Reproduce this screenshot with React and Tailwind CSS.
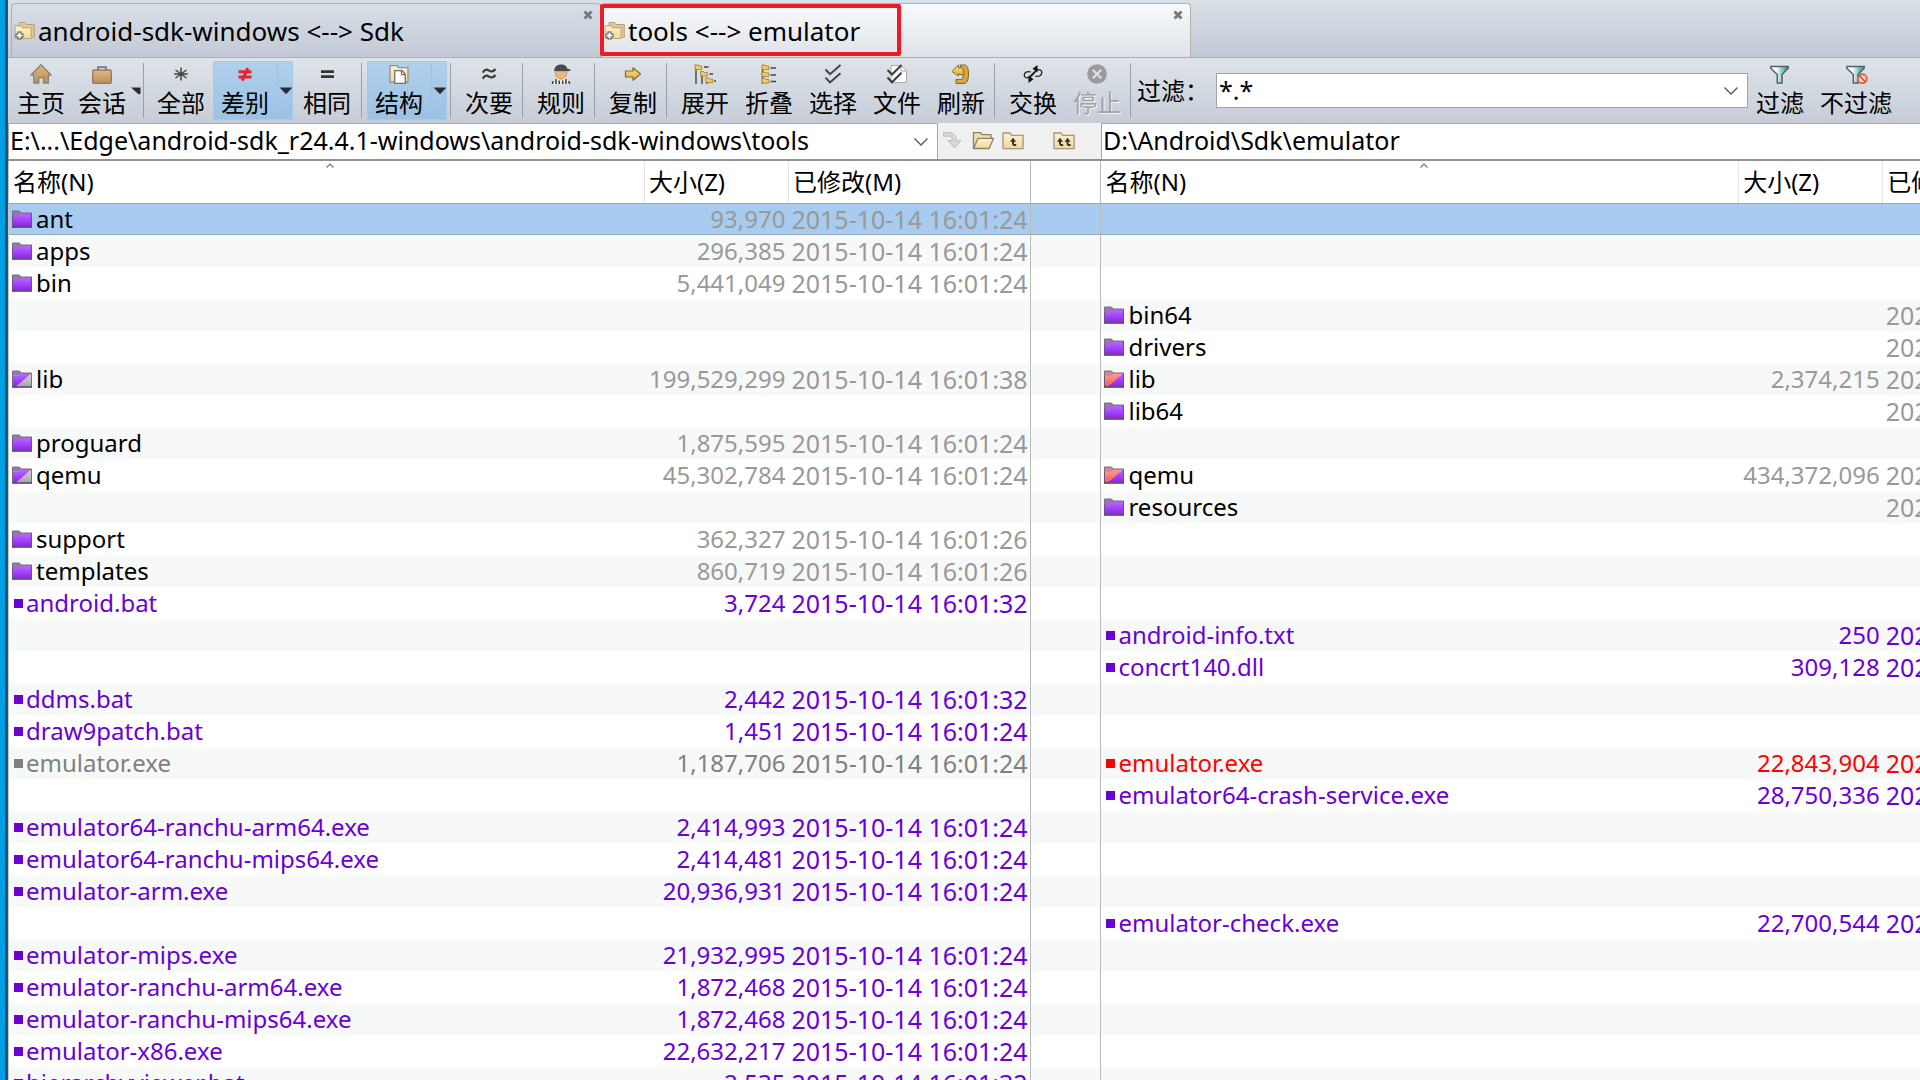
const PURPLE = "text-[#6a00d5]";
const GREY = "text-[#999999]";
const RED = "text-[#ff0000]";
const DIM = "text-[#808080]";
const T24 = "2015-10-14 16:01:24";

const dir = (name, size, date, kind = "purple") => ({ name, size, date, kind, folder: true, color: GREY });
const file = (name, size, date, color = PURPLE) => ({ name, size, date, color });

const ROWS = [
  [dir("ant", "93,970", T24), null],
  [dir("apps", "296,385", T24), null],
  [dir("bin", "5,441,049", T24), null],
  [null, dir("bin64", "", "202")],
  [null, dir("drivers", "", "202")],
  [dir("lib", "199,529,299", "2015-10-14 16:01:38", "older"), dir("lib", "2,374,215", "202", "newer")],
  [null, dir("lib64", "", "202")],
  [dir("proguard", "1,875,595", T24), null],
  [dir("qemu", "45,302,784", T24, "older"), dir("qemu", "434,372,096", "202", "newer")],
  [null, dir("resources", "", "202")],
  [dir("support", "362,327", "2015-10-14 16:01:26"), null],
  [dir("templates", "860,719", "2015-10-14 16:01:26"), null],
  [file("android.bat", "3,724", "2015-10-14 16:01:32"), null],
  [null, file("android-info.txt", "250", "202")],
  [null, file("concrt140.dll", "309,128", "202")],
  [file("ddms.bat", "2,442", "2015-10-14 16:01:32"), null],
  [file("draw9patch.bat", "1,451", T24), null],
  [file("emulator.exe", "1,187,706", T24, DIM), file("emulator.exe", "22,843,904", "202", RED)],
  [null, file("emulator64-crash-service.exe", "28,750,336", "202")],
  [file("emulator64-ranchu-arm64.exe", "2,414,993", T24), null],
  [file("emulator64-ranchu-mips64.exe", "2,414,481", T24), null],
  [file("emulator-arm.exe", "20,936,931", T24), null],
  [null, file("emulator-check.exe", "22,700,544", "202")],
  [file("emulator-mips.exe", "21,932,995", T24), null],
  [file("emulator-ranchu-arm64.exe", "1,872,468", T24), null],
  [file("emulator-ranchu-mips64.exe", "1,872,468", T24), null],
  [file("emulator-x86.exe", "22,632,217", T24), null],
  [file("hierarchyviewer.bat", "2,535", "2015-10-14 16:01:32"), null],
];

const rowTone = (i) =>
  i === 0
    ? "bg-[#a8cbf0] shadow-[inset_0_1px_#93a8bf,inset_0_-1px_#93a8bf]"
    : i % 2
      ? "bg-[#f7f9f9]"
      : "bg-white";

function Gradients() {
  return (
    <svg className="absolute size-0" aria-hidden="true">
      <defs>
        <linearGradient id="tan" x1="0" y1="0" x2="0" y2="1">
          <stop offset="0" stopColor="#e2b97c" />
          <stop offset="1" stopColor="#bd8c5c" />
        </linearGradient>
        <linearGradient id="cream" x1="0" y1="0" x2="0" y2="1">
          <stop offset="0" stopColor="#fdf3d4" />
          <stop offset="1" stopColor="#f2d795" />
        </linearGradient>
        <linearGradient id="gold" x1="0" y1="0" x2="0" y2="1">
          <stop offset="0" stopColor="#ffe27a" />
          <stop offset="1" stopColor="#e2a93a" />
        </linearGradient>
        <linearGradient id="violet" x1="0" y1="0" x2="0" y2="1">
          <stop offset="0" stopColor="#b866ff" />
          <stop offset="1" stopColor="#8b22ee" />
        </linearGradient>
        <linearGradient id="ash" x1="0" y1="0" x2="0" y2="1">
          <stop offset="0" stopColor="#d6d6d6" />
          <stop offset="1" stopColor="#a4a4a4" />
        </linearGradient>
        <linearGradient id="coral" x1="0" y1="0" x2="0" y2="1">
          <stop offset="0" stopColor="#ff9a94" />
          <stop offset="1" stopColor="#ff5c56" />
        </linearGradient>
        <linearGradient id="teal" x1="0" y1="0" x2="1" y2="0">
          <stop offset="0" stopColor="#ffffff" />
          <stop offset="0.35" stopColor="#f0fafa" />
          <stop offset="0.8" stopColor="#4fb3b3" />
          <stop offset="1" stopColor="#3d9a9c" />
        </linearGradient>
      </defs>
    </svg>
  );
}

function Svg({ w = 22, h = 20, className = "", children }) {
  return (
    <svg width={w} height={h} viewBox={`0 0 ${w} ${h}`} fill="none" className={`shrink-0 ${className}`} aria-hidden="true">
      {children}
    </svg>
  );
}

const HomeIcon = () => (
  <Svg>
    <path d="M11 .8 21 11h-2.6v8h-5v-5.5H8.800V19h-5v-8H1z" fill="url(#tan)" stroke="#8a8078" strokeWidth="1.3" strokeLinejoin="round" />
  </Svg>
);
const BriefcaseIcon = () => (
  <Svg>
    <path d="M7 7V3.2h8V7" stroke="#7f7870" strokeWidth="1.8" />
    <rect x="1.7" y="6" width="18.6" height="13.3" rx="1.4" fill="url(#tan)" stroke="#8a7a68" strokeWidth="1.3" />
  </Svg>
);
const AllIcon = () => (
  <Svg>
    <path d="M11 3.500v13M5.500 6l11 8M16.500 6l-11 8M4.200 10h13.600" stroke="#444" strokeWidth="1.500" />
  </Svg>
);
const DiffIcon = () => (
  <Svg>
    <path d="M4.500 7.800h13M4.500 13h13M13.800 4 8.200 16.600" stroke="#e3242b" strokeWidth="3" />
  </Svg>
);
const SameIcon = () => (
  <Svg>
    <path d="M5 7.600h13M5 12.600h13" stroke="#333" strokeWidth="2.800" />
  </Svg>
);
const ApproxIcon = () => (
  <Svg>
    <path d="M4.800 8.600c2-3.600 4-3.400 6.200-2s4.200 1.600 6.500-1.600M4.800 14.600c2-3.600 4-3.400 6.200-2s4.200 1.600 6.500-1.600" stroke="#3a3a3a" strokeWidth="2.200" />
  </Svg>
);
const StructureIcon = () => (
  <Svg>
    <path d="M2 18V1.700h7l1.500 2H20V18z" fill="url(#cream)" stroke="#a09070" strokeWidth="1.300" />
    <path d="M6.700 6.700h7.300l3.300 3.500v9.100H6.700z" fill="#fff" stroke="#6f7276" strokeWidth="1.300" />
    <path d="M13.500 7v3.600H17" stroke="#6f7276" strokeWidth="1.200" />
  </Svg>
);
const RefereeIcon = () => (
  <Svg>
    <path d="M5 7c0 5.500 2.600 8.200 6 8.200s6-2.700 6-8.200z" fill="#ecb680" stroke="#c48c58" strokeWidth=".8" />
    <path d="M4.200 7C4.200 2.800 7 .4 11 .4s6 2 6.300 4.400l3 .4v1.800z" fill="#4a4a4c" />
    <path d="M1.500 20c.6-3.500 3-5.200 5.500-5.700l4 2 4-2c2.500.5 5 2.200 5.500 5.700z" fill="#f4f4f4" />
    <path d="M2.200 20l1.200-3M6 20v-5M9.300 20v-3.500M12.700 20v-3.500M16 20v-5M19.800 20l-1.200-3" stroke="#333" strokeWidth="1.500" />
  </Svg>
);
const CopyIcon = () => (
  <Svg>
    <path d="M3.500 7h7.500V3.700l7.500 6.300-7.500 6.300V13H3.500z" fill="url(#gold)" stroke="#776a45" strokeWidth="1.200" strokeLinejoin="round" />
  </Svg>
);
const MiniFolder = ({ x, y }) => (
  <path d={`M${x} ${y}h3l.8 1h3v3.600h-6.800z`} fill="#f5cc5a" stroke="#a5803a" strokeWidth=".9" />
);
const ExpandIcon = () => (
  <Svg>
    <path d="M2 5v15M8 12v8M13 17v3M10 3h4.500M15.500 10H19M20 17h2" stroke="#444" strokeWidth="1.400" />
    <MiniFolder x={1} y={1} />
    <MiniFolder x={6.500} y={7.500} />
    <MiniFolder x={11.800} y={14} />
  </Svg>
);
const CollapseIcon = () => (
  <Svg>
    <path d="M4.500 5v15M12.500 4h5.500M12.500 11h5.500M12.500 17.500h5.500" stroke="#444" strokeWidth="1.400" />
    <MiniFolder x={4} y={1} />
    <MiniFolder x={4} y={8} />
    <MiniFolder x={4} y={14.500} />
  </Svg>
);
const SelectIcon = () => (
  <Svg>
    <path d="M3.500 5.500 8 10.200 18.500 1M3.500 13.700 8 18.400l10.500-9.200" stroke="#404040" strokeWidth="1.900" />
  </Svg>
);
const FilesIcon = () => (
  <Svg>
    <path d="M5 1.500h10l5.500 5.500v11.500H5z" fill="#fbfbfb" stroke="#a9acb0" />
    <path d="M15 1.500V7h5.500" stroke="#a9acb0" />
    <path d="M1.500 6 6 10.500 15.500 1M1.500 13.500 6 18.200l9.500-9.500" stroke="#3a3a3a" strokeWidth="2" />
  </Svg>
);
const RefreshIcon = () => (
  <Svg>
    <path d="M10 1h4.500c2.500 0 4 3 4 9s-1.700 9.500-4.500 9.500H6v-4h5.500c1 0 1.600-2 1.600-5.500z" fill="#d9a640" stroke="#7d6636" />
    <path d="M2 7.500 8.500.800v3.400L12 3.500c1.500 2 2.200 4.500 1.800 7.500L8.500 10v2z" fill="url(#gold)" stroke="#7d6636" />
  </Svg>
);
const SwapIcon = () => (
  <Svg>
    <path d="M9 8C5 6.800 2.200 8.600 2.200 11.200c0 2.800 3.300 3.400 5.300 1.600l6.200-6.200M13 12c4 1.200 6.800-.8 6.800-3.600 0-2.600-2.800-3.600-5-2L8.500 13" stroke="#222" strokeWidth="1.300" />
    <path d="M10.500 4.800 15.500 1v7.200zM11.500 15.200 6.500 19v-7.200z" fill="#111" />
  </Svg>
);
const StopIcon = () => (
  <Svg>
    <circle cx="11" cy="10" r="9.800" fill="#999b9e" />
    <path d="m6.800 5.800 8.400 8.400M15.200 5.800l-8.400 8.400" stroke="#dfe2e6" strokeWidth="2" />
  </Svg>
);
const FilterIcon = ({ off }) => (
  <Svg w={24}>
    <path d="M2.800 2.500h17.400v1.800l-6.200 6.200V19H9.300v-8.500L2.800 4.300z" fill="url(#teal)" stroke="#5a5f64" strokeWidth="1.500" />
    {off && (
      <g stroke="#dd5638" strokeWidth="1.700">
        <circle cx="18.300" cy="14.700" r="4.500" fill="#e8d4d0" />
        <path d="m15.200 11.600 6.200 6.200" />
      </g>
    )}
  </Svg>
);

const SessionIcon = () => (
  <Svg w={21} h={21}>
    <path d="M5 12V2.500h5.500l1.500 2h8.300v12.800h-4z" fill="#e6c88c" stroke="#b3a27e" />
    <path d="M1 17.500V5.800h6l1.500 2h8.700v10.700H1z" fill="url(#cream)" stroke="#b3a27e" />
    <path d="M5.500 11.500v8M1.500 15.500h8" stroke="#555" strokeWidth="4" />
    <path d="M5.500 12.500v6M2.500 15.500h6" stroke="#fff" strokeWidth="2" />
  </Svg>
);

function FolderIcon({ kind }) {
  const front = kind === "newer" ? "url(#coral)" : "url(#violet)";
  const back = kind === "older" ? "url(#ash)" : "url(#violet)";
  return (
    <Svg w={20} h={18}>
      <path d="M.5 1h7l1.500 2h10.500v4H.5z" fill={kind === "newer" ? "#c98f90" : "#9678ae"} stroke="#7a6c86" />
      <path d="M.5 5.500h7L9.500 4h10v12.500H.5z" fill={back} />
      {kind !== "purple" && <path d="M.5 5.500h7L9.500 4h9L4 16.500H.5z" fill={front} />}
      <path d="M.5 5.500V17M19.500 3v14" stroke={kind === "older" ? "#77727c" : "#6d5285"} />
      <path d="M0 17h20" stroke="#4b3560" strokeWidth="1.500" />
    </Svg>
  );
}

const OpenFolderIcon = () => (
  <Svg>
    <path d="M1.500 17.500V1.700h7l1.500 2h9v3.800" fill="#f4dfae" stroke="#8c8069" strokeWidth="1.300" />
    <path d="M1.500 17.500 6 7.300h15.500l-4.300 10.200z" fill="url(#cream)" stroke="#8c8069" strokeWidth="1.300" strokeLinejoin="round" />
  </Svg>
);
const UpFolderIcon = ({ twice }) => (
  <Svg>
    <path d="M1 17.700V2h7l1.500 2.300h11.600v13.400z" fill="url(#cream)" stroke="#a3987e" strokeWidth="1.300" />
    {(twice ? [4, 11.500] : [8]).map((x) => (
      <g key={x}>
        <path d={`M${x + 3} 8.500v3.800q0 2.200 3.200 1.700`} stroke="#333" strokeWidth="2" />
        <path d={`M${x} 10.800l3-4 3.200 4z`} fill="#333" />
      </g>
    ))}
  </Svg>
);
const GoIcon = () => (
  <Svg>
    <path d="M1.500 1.500h5c5 0 8 3 8 8h4.500l-6.500 7.500L6 9.500h4.500C10.500 7 9 5.200 6.500 5.200h-5z" fill="#d8d8d8" stroke="#bdbdbd" />
  </Svg>
);
const ChevronIcon = () => (
  <Svg w={16} h={10}>
    <path d="m1.500 1.500 6.500 6.500L14.500 1.500" stroke="#555" strokeWidth="1.300" />
  </Svg>
);
const CaretIcon = () => (
  <Svg w={14} h={8}>
    <path d="M.5.500h13L7 7.200z" fill="#2c2c2e" />
  </Svg>
);
const HalfCaretIcon = () => (
  <Svg w={10} h={8}>
    <path d="M0 .500h9.500V7L7.500 7.200z" fill="#2c2c2e" />
  </Svg>
);

function Tool({ icon, label, width = "w-16", disabled }) {
  return (
    <button type="button" disabled={disabled} className={`flex ${width} shrink-0 flex-col items-center pt-[3px]`}>
      {icon}
      <span className={`mt-0.5 leading-[34px] ${disabled ? "text-[#a0a3a7] [text-shadow:1px_1px_0_#f3f5f7]" : ""}`}>{label}</span>
    </button>
  );
}

function SplitTool({ icon, label }) {
  return (
    <div className="flex shrink-0 bg-linear-to-b from-[#b0d1ee] to-[#9dc1e2] outline-1 -outline-offset-1 outline-[#a3c9ee]">
      <Tool icon={icon} label={label} />
      <button type="button" aria-label={`${label} 选项`} className="flex w-4 items-center justify-center border-l border-[#98c2e8]">
        <CaretIcon />
      </button>
    </div>
  );
}

const Sep = ({ className = "ml-px w-[7px]" }) => <div className={`my-[2px] shrink-0 border-l border-[#9a9ea6] ${className}`} />;

function Tab({ title, active }) {
  return (
    <div
      className={`flex min-w-0 basis-[590px] items-center rounded-t-sm border border-b-0 border-[#b5afa5] pl-0.5 ${
        active ? "bg-linear-to-b from-[#f8fafc] to-[#dfe3e9]" : "bg-linear-to-b from-[#d9dfe7] to-[#c3cad6]"
      }`}
    >
      <button type="button" role="tab" aria-selected={!!active} className="flex flex-1 items-center gap-[3px] text-left text-[26px] leading-[40px]">
        <SessionIcon />
        {title}
      </button>
      <button type="button" aria-label="关闭" className="mr-[7px] mt-1.5 self-start">
        <Svg w={10} h={10}>
          <path d="m1.500 1.500 7 7M8.500 1.500l-7 7" stroke="#77797d" strokeWidth="3" />
        </Svg>
      </button>
    </div>
  );
}

function PathBox({ label, value }) {
  return (
    <div className="flex min-w-0 flex-1 items-center border border-b-0 border-[#a8a8a8] bg-white">
      <input aria-label={label} defaultValue={value} className="min-w-0 flex-1 pb-0.5 pl-px text-[25px] leading-[33px] outline-none" />
      <button type="button" aria-label="历史" className="mr-2 shrink-0">
        <ChevronIcon />
      </button>
    </div>
  );
}

function FileTable({ side, label, className }) {
  return (
    <table className={`table-fixed border-collapse ${className}`} aria-label={label}>
      <colgroup>
        <col />
        <col className="w-36" />
        <col className="w-[242px]" />
      </colgroup>
      <thead>
        <tr className="h-[42px] bg-white text-left leading-[42px]">
          <th className="relative pl-1 font-normal">
            名称(N)
            <Svg w={8} h={5} className="absolute left-1/2 top-[2px]">
              <path d="m.5 4.500 3.500-3.500 3.500 3.500" stroke="#777" strokeWidth="1.200" />
            </Svg>
          </th>
          <th className="border-l border-[#e4e4e4] pl-1 font-normal">大小(Z)</th>
          <th className="border-l border-[#e4e4e4] pl-1 font-normal">已修改(M)</th>
        </tr>
      </thead>
      <tbody>
        {ROWS.map((pair, i) => {
          const e = pair[side];
          return (
            <tr key={i} className={`h-8 leading-[32px] ${rowTone(i)}`}>
              <td className="p-0">
                {e && (
                  <div className={e.folder ? "flex items-center gap-1 pl-[3px]" : `flex items-center gap-[3px] pl-[5px] ${e.color}`}>
                    {e.folder ? <FolderIcon kind={e.kind} /> : <span className="size-[9px] bg-current" />}
                    {e.name}
                  </div>
                )}
              </td>
              <td className={`p-0 pr-[3px] text-right ${e ? e.color : ""}`}>{e?.size}</td>
              <td className={`p-0 pl-[3px] text-[25px] ${e ? e.color : ""}`}>{e?.date}</td>
            </tr>
          );
        })}
      </tbody>
    </table>
  );
}

export default function App() {
  return (
    <div className="flex h-screen overflow-hidden whitespace-nowrap bg-white font-['Noto_Sans','Noto_Sans_CJK_SC',sans-serif] text-[24px] text-black">
      <Gradients />
      <div className="w-2 shrink-0 border-r-3 border-[#1d5673] bg-[#009fe3]" />
      <div className="flex min-w-0 flex-1 flex-col">
        <div role="tablist" className="relative flex h-[58px] shrink-0 border-b border-[#b3aea6] bg-linear-to-b from-[#dae0e8] to-[#c2c9d5] pl-[3px] pt-[3px]">
          <Tab title="android-sdk-windows <--> Sdk" />
          <Tab title="tools <--> emulator" active />
          <div className="pointer-events-none absolute left-[592px] top-1 h-[52px] w-[301px] rounded-xs border-4 border-[#ed1c24]" />
        </div>

        <div className="flex h-[65px] shrink-0 bg-linear-to-b from-[#dfe4ea] to-[#c6cdd7] py-[3px] pl-px">
          <Tool icon={<HomeIcon />} label="主页" />
          <div className="flex shrink-0">
            <Tool icon={<BriefcaseIcon />} label="会话" width="w-[58px]" />
            <button type="button" aria-label="会话 选项" className="flex w-3 items-center">
              <HalfCaretIcon />
            </button>
          </div>
          <Sep className="w-1.5" />
          <Tool icon={<AllIcon />} label="全部" />
          <SplitTool icon={<DiffIcon />} label="差别" />
          <div className="mx-0.5 flex">
            <Tool icon={<SameIcon />} label="相同" />
          </div>
          <Sep className="w-1.5" />
          <SplitTool icon={<StructureIcon />} label="结构" />
          <div className="w-0.5 shrink-0" />
          <Sep />
          <Tool icon={<ApproxIcon />} label="次要" />
          <Sep />
          <Tool icon={<RefereeIcon />} label="规则" />
          <Sep />
          <Tool icon={<CopyIcon />} label="复制" />
          <Sep />
          <Tool icon={<ExpandIcon />} label="展开" />
          <Tool icon={<CollapseIcon />} label="折叠" />
          <Tool icon={<SelectIcon />} label="选择" />
          <Tool icon={<FilesIcon />} label="文件" />
          <Tool icon={<RefreshIcon />} label="刷新" />
          <Sep />
          <Tool icon={<SwapIcon />} label="交换" />
          <Tool icon={<StopIcon />} label="停止" disabled />
          <Sep />
          <label htmlFor="filter" className="mr-[7px] self-center leading-[34px]">
            过滤：
          </label>
          <div className="my-3 flex min-w-0 flex-1 items-center border border-[#a0a4aa] bg-white">
            <input id="filter" defaultValue="*.*" className="min-w-0 flex-1 pl-0.5 text-[25px] leading-[33px] outline-none" />
            <button type="button" aria-label="过滤列表" className="mr-2 shrink-0">
              <ChevronIcon />
            </button>
          </div>
          <Tool icon={<FilterIcon />} label="过滤" />
          <Tool icon={<FilterIcon off />} label="不过滤" width="w-[88px]" />
          <div className="w-5 shrink-0" />
        </div>

        <div className="grid h-[38px] shrink-0 grid-cols-[minmax(0,1022fr)_71px_minmax(0,819fr)] border-b-2 border-[#929292] bg-[#f0f0f0]">
          <div className="flex min-w-0">
            <PathBox label="左侧路径" value={"E:\\...\\Edge\\android-sdk_r24.4.1-windows\\android-sdk-windows\\tools"} />
            <div className="flex w-[92px] shrink-0 items-center gap-2 pl-1">
              <button type="button" aria-label="前往" disabled><GoIcon /></button>
              <button type="button" aria-label="打开文件夹"><OpenFolderIcon /></button>
              <button type="button" aria-label="上一级"><UpFolderIcon /></button>
            </div>
          </div>
          <button type="button" aria-label="两侧上一级" className="flex items-center justify-center pr-1">
            <UpFolderIcon twice />
          </button>
          <div className="flex min-w-0 items-center overflow-hidden border-l border-t border-[#a8a8a8] bg-white">
            <input aria-label="右侧路径" defaultValue={"D:\\Android\\Sdk\\emulator"} className="min-w-0 flex-1 pb-0.5 pl-px text-[25px] leading-[33px] outline-none" />
          </div>
        </div>

        <div className="grid min-h-0 flex-1 grid-cols-[minmax(0,1022fr)_71px_minmax(0,819fr)] overflow-hidden border-l border-[#c4c4c4]">
          <FileTable side={0} label="tools" className="w-full" />
          <div className="border-x border-[#b9b9b9]">
            <div className="h-[42px] bg-white" />
            {ROWS.map((_, i) => (
              <div key={i} className={`h-8 ${rowTone(i)}`} />
            ))}
          </div>
          <div className="overflow-hidden">
            <FileTable side={1} label="emulator" className="w-[125%]" />
          </div>
        </div>
      </div>
    </div>
  );
}
